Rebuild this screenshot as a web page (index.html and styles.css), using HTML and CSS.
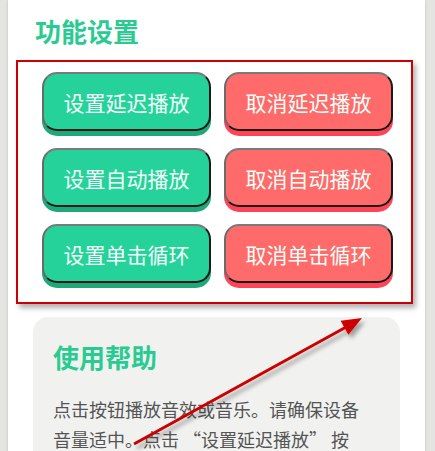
FILE: index.html
```html
<!DOCTYPE html>
<html lang="zh-CN">
<head>
    <meta charset="UTF-8">
    <meta name="viewport" content="width=device-width, initial-scale=1.0">
    <title>功能设置</title>
    <link rel="stylesheet" href="styles.css">
</head>
<body>

    <div class="page">
        <h2 class="section-title">功能设置</h2>

        <div class="controls">
            <button class="btn btn-set">设置延迟播放</button>
            <button class="btn btn-cancel">取消延迟播放</button>
            <button class="btn btn-set">设置自动播放</button>
            <button class="btn btn-cancel">取消自动播放</button>
            <button class="btn btn-set">设置单击循环</button>
            <button class="btn btn-cancel">取消单击循环</button>
        </div>

        <div class="help-card">
            <h2 class="help-title">使用帮助</h2>
            <p class="help-text">点击按钮播放音效或音乐。请确保设备音量适中。点击 “设置延迟播放” 按钮后，再点击音效按钮即可延迟播放。</p>
        </div>
    </div>

    <!-- annotation arrow -->
    <svg class="arrow" width="435" height="451" viewBox="0 0 435 451">
        <defs>
            <filter id="arrow-shadow" x="-20%" y="-20%" width="140%" height="140%">
                <feDropShadow dx="3" dy="4" stdDeviation="2" flood-color="#000" flood-opacity="0.35"/>
            </filter>
        </defs>
        <g filter="url(#arrow-shadow)">
            <line x1="134" y1="444" x2="348" y2="326" stroke="#cc0000" stroke-width="3"/>
            <polygon points="362,318 348.4,334.7 340.6,320.7" fill="#cc0000"/>
        </g>
    </svg>

</body>
</html>
```

FILE: styles.css
```css
body {
    font-family: "Noto Sans CJK SC", "Noto Sans", sans-serif;
    background-color: #e4e5e3;
    margin: 0;
    padding: 0;
    overflow: hidden;
}

.page {
    background-color: #fff;
    margin: 0 10px 0 8px;
    min-height: 100vh;
    padding-top: 16px;
    box-shadow: 0 0 3px rgba(0, 0, 0, 0.15);
}

.section-title {
    margin: 0;
    padding-left: 27px;
    font-size: 26px;
    line-height: 30px;
    font-weight: bold;
    color: #2acb92;
}

.controls {
    margin: 14px 0 0 8px;
    width: 351px;
    padding: 10px 18px 19px 24px;
    border: 2px solid #cc0000;
    box-shadow: 3px 4px 5px rgba(0, 0, 0, 0.3);
    display: grid;
    grid-template-columns: 169px 169px;
    column-gap: 13px;
    row-gap: 17px;
}

.btn {
    height: 59px;
    padding: 0;
    border: 2px solid;
    border-color: #7a7a7a #1a1a1a #1a1a1a #6a6a6a;
    border-radius: 15px;
    font-family: inherit;
    font-size: 21px;
    color: #f4fffa;
    cursor: pointer;
}

.btn-set {
    background-color: #25d39a;
    box-shadow: 0 5px 0 #1fa97a;
}

.btn-cancel {
    background-color: #ff6b6b;
    box-shadow: 0 5px 0 #ff4458;
}

.help-card {
    margin: 13px 0 0 25px;
    width: 327px;
    padding: 25px 20px 20px 20px;
    background-color: #f1f2f0;
    border-radius: 15px;
}

.help-title {
    margin: 0 0 22px 0;
    font-size: 26px;
    line-height: 30px;
    font-weight: bold;
    color: #2acb92;
}

.help-text {
    margin: 0;
    max-width: 309px;
    font-size: 18px;
    line-height: 30px;
    color: #555;
}

.arrow {
    position: absolute;
    left: 0;
    top: 0;
    pointer-events: none;
}
```
